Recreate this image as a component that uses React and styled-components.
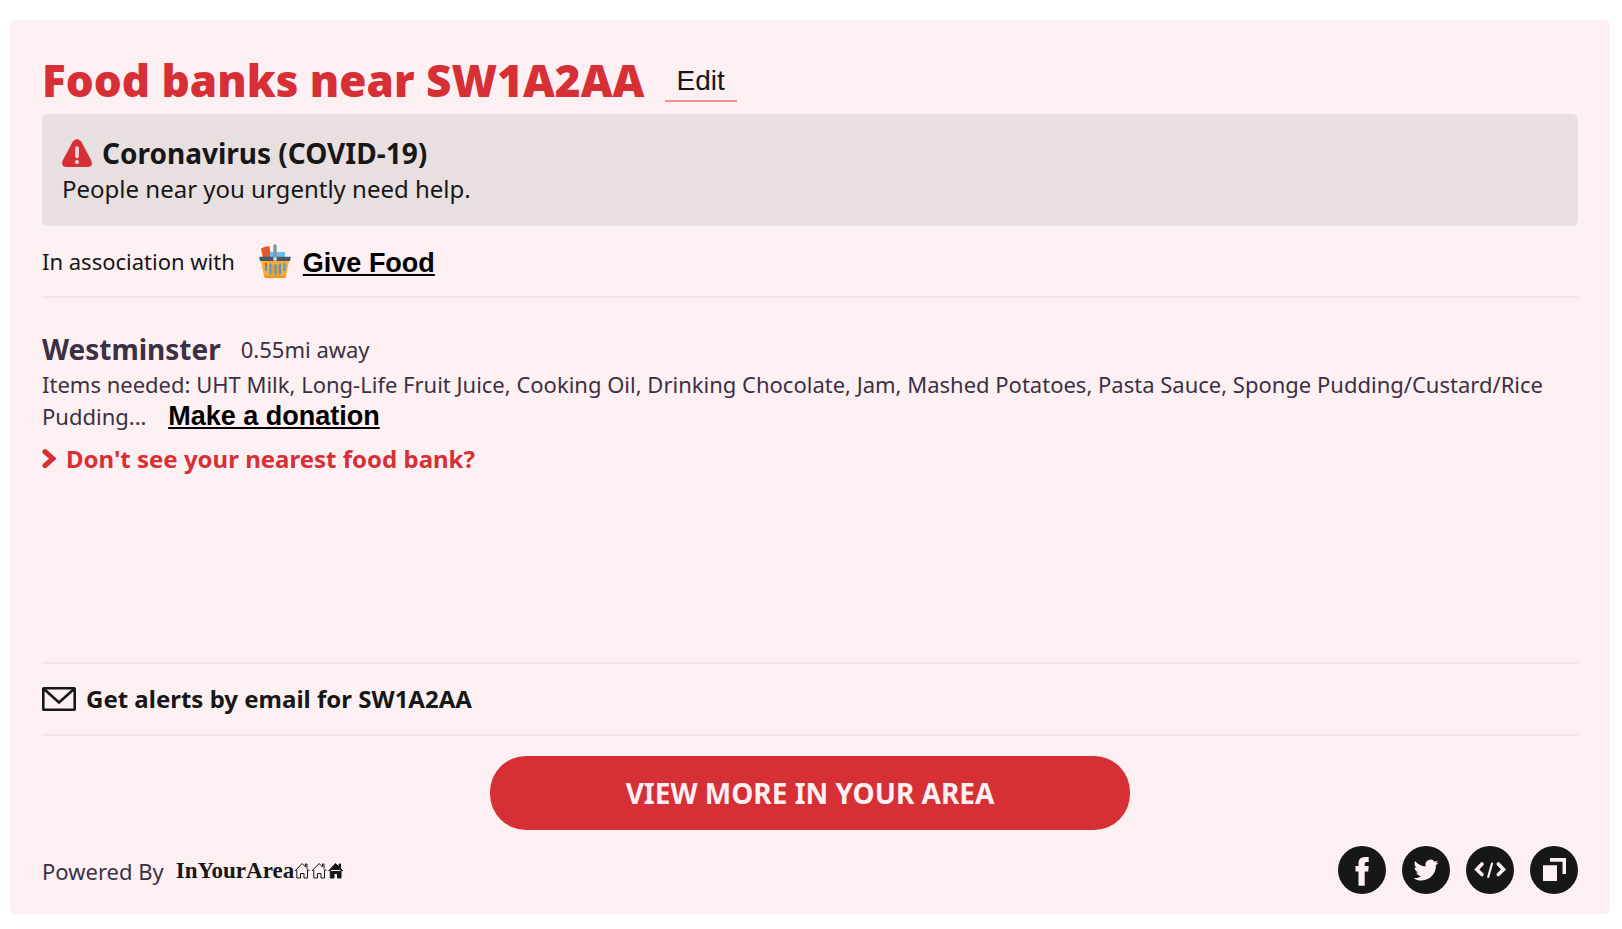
import React from "react";
import styled, { createGlobalStyle } from "styled-components";

const GlobalStyle = createGlobalStyle`
  *, *::before, *::after { box-sizing: border-box; }
  body {
    margin: 0;
    background: #fff;
    color: #171717;
    font-family: "Noto Sans", sans-serif;
  }
  h1, h2, p { margin: 0; }
  svg { display: block; flex: none; }
`;

const Card = styled.main`
  display: flex;
  flex-direction: column;
  margin: 20px 12px 14px 10px;
  padding: 36px 32px 20px;
  border-radius: 6px;
  background: #fdf0f2;
`;

const Header = styled.header`
  display: flex;
  align-items: center;
  gap: 20px;
  height: 48px;
  margin-bottom: 10px;
`;

const Title = styled.h1`
  color: #d72f36;
  font-size: 44px;
  font-weight: 900;
  line-height: 48px;
`;

const EditButton = styled.button`
  height: 44px;
  padding: 4px 12px 0;
  border: 0;
  border-bottom: 2px solid #ee9196;
  background: none;
  color: #171717;
  font: 28px/36px "Liberation Sans", Arial, sans-serif;
  cursor: pointer;
`;

const Alert = styled.section`
  padding: 20px;
  border-radius: 6px;
  background: #e8dfe0;
`;

const AlertTitle = styled.h2`
  display: flex;
  align-items: center;
  gap: 10px;
  font-size: 28px;
  font-weight: 700;
  line-height: 38px;
`;

const AlertText = styled.p`
  font-size: 24px;
  line-height: 34px;
`;

const Partner = styled.div`
  display: flex;
  align-items: center;
  height: 72px;
  border-bottom: 2px solid #f1e5e7;
  font-size: 22px;
  line-height: 32px;
`;

const Basket = styled.svg`
  margin: 0 12px 0 24px;
`;

const TextLink = styled.a`
  padding-top: 4px;
  color: #000;
  font: bold 27px/32px "Liberation Sans", Arial, sans-serif;
  text-decoration: underline;
`;

const Listing = styled.section`
  min-height: 364px;
  padding-top: 32px;
  color: #3b3044;
  font-size: 22px;
  line-height: 32px;
`;

const BankHeading = styled.div`
  display: flex;
  align-items: center;
  gap: 20px;
  height: 38px;
`;

const BankName = styled.h2`
  font-size: 28px;
  font-weight: 700;
  line-height: 38px;
`;

const Items = styled.p`
  ${TextLink} { margin-left: 16px; }
`;

const MissingLink = styled.a`
  display: inline-flex;
  align-items: center;
  gap: 10px;
  margin-top: 10px;
  color: #d72f36;
  font-size: 24px;
  font-weight: 700;
  line-height: 34px;
  text-decoration: none;
`;

const EmailButton = styled.button`
  display: flex;
  align-items: center;
  gap: 10px;
  height: 74px;
  padding: 0;
  border: 0;
  border-top: 2px solid #f1e5e7;
  border-bottom: 2px solid #f1e5e7;
  background: none;
  color: #171717;
  font: 700 24px/32px "Noto Sans", sans-serif;
  cursor: pointer;
`;

const MoreLink = styled.a`
  align-self: center;
  width: 640px;
  max-width: 100%;
  margin-top: 20px;
  padding: 18px 20px;
  border-radius: 36px;
  background: #d72f36;
  color: #fdf0f2;
  font-size: 28px;
  font-weight: 700;
  line-height: 38px;
  text-align: center;
  text-decoration: none;
`;

const Footer = styled.footer`
  display: flex;
  align-items: center;
  justify-content: space-between;
  margin-top: 16px;
`;

const Powered = styled.div`
  display: flex;
  align-items: center;
  gap: 12px;
  padding-top: 2px;
  color: #3b3044;
  font-size: 22px;
  line-height: 32px;
`;

const Brand = styled.a`
  display: flex;
  align-items: center;
  color: #171717;
  font: bold 23px/32px "Liberation Serif", "Times New Roman", serif;
  text-decoration: none;
`;

const Shares = styled.div`
  display: flex;
  gap: 16px;
`;

const ShareButton = styled.button`
  width: 48px;
  height: 48px;
  padding: 0;
  border: 0;
  border-radius: 50%;
  background: #171717;
  color: #fdf0f2;
  cursor: pointer;
`;

const WarningIcon = () => (
  <svg width="30" height="28" viewBox="0 0 30 28" aria-hidden="true">
    <path d="M10.8 2.5Q15-2.5 19.2 2.5L29.3 21.5Q31.5 28 25.5 28H4.5Q-1.5 28 .7 21.5Z" fill="#d72f36" />
    <path d="M15 9v8.5" stroke="#e8dfe0" strokeWidth="3.6" strokeLinecap="round" />
    <circle cx="15" cy="23" r="2" fill="#e8dfe0" />
  </svg>
);

const BasketIcon = () => (
  <Basket width="32" height="34" viewBox="0 0 32 34" aria-hidden="true">
    <path d="M2 4.5Q6 2 10.5 2.2L12 14H4Z" fill="#e25a2c" />
    <path d="M11 8h15v6H11Z" fill="#6bbcf0" />
    <path d="M1.500 15H30.500L27 32Q26.500 34 25 34H7Q5.500 34 5 32Z" fill="#f9ac36" />
    <path d="M5 31.500H27L26.500 33Q26 34 25 34H7Q5.500 34 5 32Z" fill="#eb9724" />
    <path d="M7 19v8M11.500 19.500v11M16.500 20v11M21 19.500v11M25.500 19v8" stroke="#4a98d4" strokeWidth="2" />
    <path d="M14 21v9M19 21v9" stroke="#d98b2b" strokeWidth="1" />
    <path d="M7 19v3" stroke="#d85a2b" strokeWidth="2" />
    <path d="M1 12.700H31Q32 12.700 31.700 14L31 17H1L.3 14Q0 12.700 1 12.700Z" fill="#465a65" />
    <path d="M14.300 1Q16 -.6 17.700 1V15H14.300Z" fill="#8298a4" />
    <circle cx="16" cy="15" r="2" fill="#c3d0d6" />
  </Basket>
);

const ChevronIcon = () => (
  <svg width="14" height="20" viewBox="0 0 14 20" aria-hidden="true">
    <path d="M3 2.800L10.800 9.600 3 16.600" fill="none" stroke="#d72f36" strokeWidth="5.200" strokeLinecap="round" />
  </svg>
);

const MailIcon = () => (
  <svg width="34" height="24" viewBox="0 0 34 24" fill="none" stroke="#171717" strokeWidth="2.600" aria-hidden="true">
    <rect x="1.300" y="1.300" width="31.400" height="21.400" rx=".5" />
    <path d="M2 2l15 13.500L32 2" />
  </svg>
);

const HOUSE = "M1 9L8 1.500 11.500 5V2h1.500v4.500L15.500 9M2.800 8v8H6.500v-4.500h3.500V16h3.500V8";

const HousesIcon = () => (
  <svg width="50" height="18" viewBox="0 0 50 18" stroke="#171717" strokeWidth="1" aria-hidden="true">
    <path d={HOUSE} fill="none" />
    <path d={HOUSE} fill="none" transform="translate(17 0)" />
    <path d={HOUSE} fill="#171717" transform="translate(33.500 0)" />
  </svg>
);

const FacebookIcon = () => (
  <svg width="48" height="48" viewBox="0 0 48 48" aria-hidden="true">
    <path d="M20.500 39.700V25.500H17.500V20H20.500V17Q20.500 11 27 11H30.700V16H28.500Q26.700 16 26.700 18V20H30.700L30.200 25.500H26.700V39.700Z" fill="currentColor" />
  </svg>
);

const TwitterIcon = () => (
  <svg width="48" height="48" viewBox="0 0 48 48" aria-hidden="true">
    <path transform="translate(11.500 13.700)" d="M25 2.800c-.9.400-1.900.7-2.900.8 1-.6 1.900-1.600 2.200-2.800-1 .6-2.100 1-3.200 1.200A5.100 5.100 0 0 0 12.200 6.700C8 6.500 4.200 4.500 1.700 1.300c-1.300 2.300-.7 5.300 1.600 6.900-.8 0-1.600-.3-2.300-.6 0 2.400 1.700 4.600 4.100 5.100-.7.200-1.500.2-2.300.1.600 2 2.500 3.500 4.800 3.600-2.200 1.700-4.900 2.400-7.600 2.100 2.300 1.500 5 2.300 7.900 2.300 9.600 0 14.800-8 14.500-15.200 1-.7 1.900-1.700 2.600-2.800Z" fill="currentColor" />
  </svg>
);

const EmbedIcon = () => (
  <svg width="48" height="48" viewBox="0 0 48 48" fill="none" stroke="currentColor" strokeLinecap="round" aria-hidden="true">
    <path d="M16 18l-5.200 5.500 5.200 5M32.300 18l5.200 5.500-5.200 5" strokeWidth="3.600" />
    <path d="M26 17.500l-3.800 13.500" strokeWidth="2.200" />
  </svg>
);

const CopyIcon = () => (
  <svg width="48" height="48" viewBox="0 0 48 48" aria-hidden="true">
    <path d="M13 19.300h14v15.700H13ZM20 12h16v16h-3.500V15.700H20Z" fill="currentColor" />
  </svg>
);

const shares = [
  { label: "Share on Facebook", Icon: FacebookIcon },
  { label: "Share on Twitter", Icon: TwitterIcon },
  { label: "Embed", Icon: EmbedIcon },
  { label: "Copy link", Icon: CopyIcon },
];

export default function App() {
  return (
    <>
      <GlobalStyle />
      <Card>
        <Header>
          <Title>Food banks near SW1A2AA</Title>
          <EditButton type="button">Edit</EditButton>
        </Header>
        <Alert>
          <AlertTitle><WarningIcon />Coronavirus (COVID-19)</AlertTitle>
          <AlertText>People near you urgently need help.</AlertText>
        </Alert>
        <Partner>
          <span>In association with</span>
          <BasketIcon />
          <TextLink href="#give-food">Give Food</TextLink>
        </Partner>
        <Listing>
          <BankHeading>
            <BankName>Westminster</BankName>
            <span>0.55mi away</span>
          </BankHeading>
          <Items>
            Items needed: UHT Milk, Long-Life Fruit Juice, Cooking Oil, Drinking Chocolate, Jam, Mashed
            Potatoes, Pasta Sauce, Sponge Pudding/Custard/Rice Pudding...{" "}
            <TextLink href="#donate">Make a donation</TextLink>
          </Items>
          <MissingLink href="#missing"><ChevronIcon />Don't see your nearest food bank?</MissingLink>
        </Listing>
        <EmailButton type="button"><MailIcon />Get alerts by email for SW1A2AA</EmailButton>
        <MoreLink href="#more">VIEW MORE IN YOUR AREA</MoreLink>
        <Footer>
          <Powered>
            <span>Powered By</span>
            <Brand href="#home">InYourArea<HousesIcon /></Brand>
          </Powered>
          <Shares>
            {shares.map(({ label, Icon }) => (
              <ShareButton key={label} type="button" aria-label={label}><Icon /></ShareButton>
            ))}
          </Shares>
        </Footer>
      </Card>
    </>
  );
}
